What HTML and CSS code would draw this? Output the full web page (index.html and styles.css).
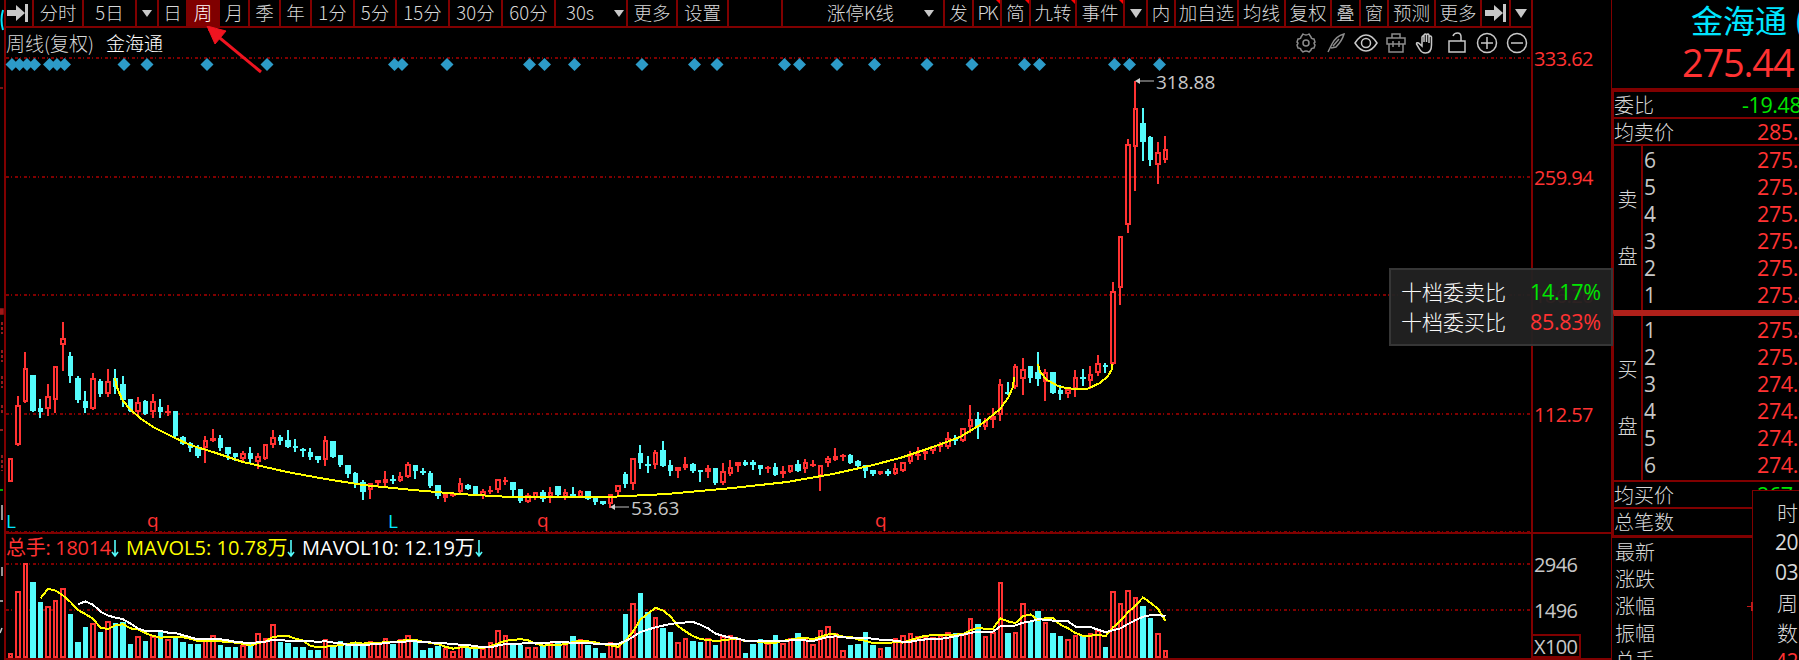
FILE: index.html
```
<!DOCTYPE html>
<html lang="zh-CN">
<head>
  <meta charset="UTF-8">
  <title>金海通 周线</title>
  <link rel="stylesheet" href="styles.css">
</head>
<body>
  <div class="app">
    <!-- Edge of the panel on the left -->
    <svg class="edge" viewBox="0 0 4 660">
      <path d="M3 10Q0 20 3 30" class="e-cyan"/>
      <path d="M0 88h3M0 309h3v5h-3z" class="e-red"/>
      <path d="M2 322v12M2 350v12M2 376v12M2 405v10M0 430h3M2 455v16" class="e-dim"/>
      <path d="M0 490h3" class="e-green"/>
      <path d="M2 505v15M2 567v9M0 601h3M2 628l-2 5" class="e-gray"/>
    </svg>

    <!-- Chart -->
    <div class="chart">
      <div class="toolbar">
        <span class="tab"><svg class="jump" viewBox="0 0 22 20"><path d="M0 7h9V2l9 8-9 8v-5H0zM18 1h3v18h-3z"/></svg></span>
        <span class="tab">分时</span>
        <span class="tab">5日</span>
        <span class="tab"><i class="caret"></i></span>
        <span class="tab">日</span>
        <span class="tab active">周</span>
        <span class="tab">月</span>
        <span class="tab">季</span>
        <span class="tab">年</span>
        <span class="tab">1分</span>
        <span class="tab">5分</span>
        <span class="tab">15分</span>
        <span class="tab">30分</span>
        <span class="tab">60分</span>
        <span class="tab select">30s<i class="caret"></i></span>
        <span class="tab">更多</span>
        <span class="tab">设置</span>
        <span class="tab"></span>
        <span class="tab kline-type">涨停K线<i class="caret"></i></span>
        <span class="tab">发</span>
        <span class="tab tight hot">PK</span>
        <span class="tab hot">简</span>
        <span class="tab hot">九转</span>
        <span class="tab hot">事件</span>
        <span class="tab"><i class="caret big"></i></span>
        <span class="tab">内</span>
        <span class="tab">加自选</span>
        <span class="tab">均线</span>
        <span class="tab">复权</span>
        <span class="tab">叠</span>
        <span class="tab">窗</span>
        <span class="tab">预测</span>
        <span class="tab">更多</span>
        <span class="tab"><svg class="jump" viewBox="0 0 22 20"><path d="M0 7h9V2l9 8-9 8v-5H0zM18 1h3v18h-3z"/></svg></span>
        <span class="tab"><i class="caret big"></i></span>
      </div>

      <div class="title-row">
        <span class="period">周线(复权)</span>
        <span class="stock">金海通</span>
        <div class="tools">
          <svg class="dim" viewBox="0 0 24 22"><path d="M9 2q3 2 6 0l2 3q0 2 3 2l1 3q-2 1 0 3l-1 3q-3 0-3 2l-2 2q-3-2-6 0l-2-2q0-2-3-2l-1-3q2-2 0-3l1-3q3 0 3-2z"/><circle cx="12" cy="11" r="3"/></svg>
          <svg class="dim" viewBox="0 0 24 22"><path d="M4 20L8 12Q12 4 20 2Q18 9 12 15L7 16M9 14l6-7"/></svg>
          <svg viewBox="0 0 24 22"><path d="M1 11Q6 3 12 3T23 11Q18 19 12 19T1 11z"/><circle cx="12" cy="11" r="4.5"/></svg>
          <svg class="dim" viewBox="0 0 24 22"><path d="M3 6h18v6H3zM5 12v8h14v-8M8 6V2h8v4M9 9v6M15 9v6M9 12h6"/></svg>
          <svg viewBox="0 0 24 22"><path d="M8 14V5q1-2 2 0v5V3q1.500-2 2.500 0v7V3q1.500-2 2.500 0v8V5q1.500-2 2.500 0v8q0 8-6 8-4 0-6-4l-3-5q0-2 2-1z"/></svg>
          <svg viewBox="0 0 24 22"><path d="M4 9h16v11H4zM8 4q1-3 4.500-3 3.500 0 3.500 4v4"/></svg>
          <svg viewBox="0 0 24 22"><circle cx="12" cy="11" r="9.500"/><path d="M6 11h12M12 5v12"/></svg>
          <svg viewBox="0 0 24 22"><circle cx="12" cy="11" r="9.500"/><path d="M6 11h12"/></svg>
        </div>
      </div>

      <svg id="kline" class="kline" viewBox="6 56 1525 476"></svg>

      <div class="vol-title">
        <span class="total">总手: 18014<svg viewBox="0 0 8 18"><path d="M4 0v15M1 12l3 4 3-4"/></svg></span>
        <span class="ma5">MAVOL5: 10.78万<svg viewBox="0 0 8 18"><path d="M4 0v15M1 12l3 4 3-4"/></svg></span>
        <span class="ma10">MAVOL10: 12.19万<svg viewBox="0 0 8 18"><path d="M4 0v15M1 12l3 4 3-4"/></svg></span>
      </div>
      <svg id="volume" class="volume" viewBox="6 562 1525 96"></svg>

      <svg class="pointer" viewBox="0 0 60 50">
        <path d="M3 3L55 46" />
        <polygon points="1,0 20,5 9,18"/>
      </svg>
    </div>

    <!-- Price scale -->
    <div class="scale">
      <div class="prices">
        <span>333.62</span>
        <span>259.94</span>
        <span>186.26</span>
        <span>112.57</span>
      </div>
      <div class="vols">
        <span>2946</span>
        <span>1496</span>
        <span class="unit">X100</span>
      </div>
    </div>

    <!-- Quotes -->
    <div class="quotes">
      <div class="head">
        <div class="name">金海通 (</div>
        <div class="price">275.44</div>
      </div>
      <div class="line first"><span>委比</span><b class="down wide">-19.48%</b></div>
      <div class="line"><span>均卖价</span><b>285.10</b></div>
      <div class="book">
        <div class="side"><span>卖</span><span>盘</span></div>
        <div class="levels">
          <div><span>6</span><b>275.77</b></div>
          <div><span>5</span><b>275.70</b></div>
          <div><span>4</span><b>275.66</b></div>
          <div><span>3</span><b>275.60</b></div>
          <div><span>2</span><b>275.50</b></div>
          <div><span>1</span><b>275.45</b></div>
        </div>
      </div>
      <div class="book buy">
        <div class="side"><span>买</span><span>盘</span></div>
        <div class="levels">
          <div><span>1</span><b>275.44</b></div>
          <div><span>2</span><b>275.01</b></div>
          <div><span>3</span><b>274.99</b></div>
          <div><span>4</span><b>274.90</b></div>
          <div><span>5</span><b>274.88</b></div>
          <div><span>6</span><b>274.80</b></div>
        </div>
      </div>
      <div class="line"><span>均买价</span><b class="down">267.10</b></div>
      <div class="line last"><span>总笔数</span></div>
      <div class="stats">
        <div>最新</div>
        <div>涨跌</div>
        <div>涨幅</div>
        <div>振幅</div>
        <div>总手</div>
      </div>

      <div class="popup">
        <div class="cjk">时</div>
        <div>20</div>
        <div>03</div>
        <div class="cjk">周</div>
        <div class="cjk">数</div>
        <div class="up">42</div>
      </div>
      <i class="cross"></i>
    </div>

    <div class="tooltip">
      <span>十档委卖比</span><b class="down">14.17%</b>
      <span>十档委买比</span><b>85.83%</b>
    </div>
  </div>

  <script src="chart.js"></script>
</body>
</html>
```
FILE: styles.css
```
:root {
  --line: #800000;
  --red: #ff3232;
  --cyan: #54fcfc;
  --green: #00e600;
  --text: #c8c8c8;
  --cjk: 'Noto Sans CJK SC', sans-serif;
  --num: 'Open Sans', 'Noto Sans CJK SC', sans-serif;
}

* {
  box-sizing: border-box;
}

body {
  margin: 0;
  background: #000;
  color: #d8d8d8;
  font-family: var(--cjk);
  font-weight: 300;
  overflow: hidden;
}

b {
  font-family: var(--num);
  font-weight: 400;
  color: var(--red);
}

.app {
  position: relative;
  display: grid;
  grid-template-columns: 4px 1527px 80px 188px;
  width: 1799px;
  height: 660px;
  overflow: hidden;
}

.edge {
  width: 4px;
  height: 660px;
  fill: none;
  stroke-width: 1.5;
}

.e-cyan { stroke: #00e5ff; stroke-width: 2; }
.e-red { stroke: #a01818; fill: #a01818; }
.e-dim { stroke: #c02525; stroke-dasharray: 3 2; }
.e-green { stroke: var(--green); }
.e-gray { stroke: var(--text); }

/* Chart column */
.chart {
  position: relative;
  display: flex;
  flex-direction: column;
  border-left: 2px solid var(--line);
}

.toolbar {
  display: grid;
  grid-template-columns: 30px 50px 53px 22px 29px 32px 30px 31px 31px 43px 42px 53px 53px 53px 72px 50px 51px 54px 162px 29px 28px 29px 46px 48px 23px 28px 63px 47px 46px 29px 28px 47px 46px 29px 20px;
  height: 28px;
  margin-left: -2px;
  border-bottom: 2px solid var(--line);
}

.tab {
  position: relative;
  display: flex;
  align-items: center;
  justify-content: center;
  height: 26px;
  padding-bottom: 2px;
  border-right: 2px solid var(--line);
  font-size: 18.5px;
  line-height: 24px;
  white-space: nowrap;
}

.tab:last-child {
  border-right: 0;
}

.tab.active {
  background: var(--line);
  color: #fff;
}

.tab.tight {
  letter-spacing: -2px;
}

.tab.hot::after {
  content: '';
  position: absolute;
  top: 0;
  right: 0;
  border-top: 4px solid #f00;
  border-left: 4px solid transparent;
}

.tab.select {
  justify-content: space-between;
  padding: 0 2px 2px 10px;
}

.tab.kline-type {
  justify-content: flex-end;
  gap: 26px;
  padding-right: 9px;
}

.caret {
  margin-top: 2px;
  border: 5.5px solid transparent;
  border-top: 7px solid var(--text);
  border-bottom: 0;
}

.kline-type .caret {
  margin-left: 4px;
}

.caret.big {
  border-width: 9px 6.5px 0;
}

.jump {
  width: 22px;
  height: 20px;
  margin-top: 2px;
  fill: var(--text);
}

.title-row {
  display: flex;
  align-items: center;
  height: 28px;
  font-size: 19px;
  line-height: 26px;
  padding-top: 2px;
}

.stock {
  margin-left: 12px;
  color: #fff;
}

.tools {
  display: flex;
  gap: 6.2px;
  margin-left: auto;
  padding-right: 2px;
}

.tools svg {
  width: 24px;
  height: 22px;
  fill: none;
  stroke: #c8c8c8;
  stroke-width: 1.5;
}

.tools .dim {
  stroke: #8c8c8c;
}

.kline {
  display: block;
  width: 1525px;
  height: 476px;
  overflow: visible;
}

.vol-title {
  display: grid;
  grid-template-columns: 120px 176px 200px;
  height: 30px;
  border-top: 2px solid var(--line);
  font-family: var(--num);
  font-size: 20px;
  font-weight: 400;
  line-height: 28px;
  letter-spacing: 0;
  white-space: nowrap;
}

.vol-title svg {
  width: 8px;
  height: 18px;
  vertical-align: -3px;
  fill: none;
  stroke: var(--cyan);
  stroke-width: 1.6;
}

.total { color: var(--red); letter-spacing: -0.3px; }
.ma5 { color: #ff0; }
.ma10 { color: #fff; }

.volume {
  display: block;
  width: 1525px;
  height: 98px;
  border-bottom: 2px solid var(--line);
}

.grid {
  stroke: var(--line);
  stroke-width: 2;
  stroke-dasharray: 3 2 1 3;
}

.up-bar { stroke: var(--red); stroke-width: 2; fill: #000; }
.up-fill { fill: var(--red); }
.down-fill { fill: var(--cyan); }
.diamond { fill: #2d9bc8; }
.arc { fill: none; stroke: #ff0; stroke-width: 2; }
.avg5 { fill: none; stroke: #ff0; stroke-width: 2; }
.avg10 { fill: none; stroke: #fff; stroke-width: 2; }
.mark { font: 19px 'Open Sans', sans-serif; }
.mark-l { fill: #00e5ff; }
.mark-q { fill: var(--red); }
.mark-p { fill: var(--text); }
.lead { stroke: #808080; stroke-width: 1.5; }
.lead-head { fill: #d0d0d0; }

.pointer {
  position: absolute;
  left: 200px;
  top: 26px;
  width: 60px;
  height: 50px;
  fill: #f01420;
  stroke: #f01420;
}

.pointer path {
  stroke-width: 3;
}

/* Price scale */
.scale {
  display: flex;
  flex-direction: column;
  border-left: 2px solid var(--line);
  color: var(--text);
  font-family: var(--num);
  font-size: 20px;
  font-weight: 400;
  letter-spacing: -0.6px;
}

.prices {
  height: 532px;
  color: var(--red);
}

.prices span {
  display: block;
  height: 118.6px;
  padding-left: 1px;
  line-height: 118.6px;
}

.vols {
  display: flex;
  flex-direction: column;
  height: 128px;
  padding-top: 10px;
  border-top: 2px solid var(--line);
  border-bottom: 2px solid var(--line);
}

.vols span {
  height: 46px;
  padding-left: 1px;
  line-height: 41px;
}

.vols .unit {
  width: 48px;
  height: 24px;
  margin-top: -2px;
  flex: none;
  border: 2px solid var(--line);
  border-left: 0;
  line-height: 21px;
}

/* Quotes */
.quotes {
  position: relative;
  border-left: 1px solid var(--line);
  overflow: hidden;
  font-size: 20px;
}

.head {
  height: 92px;
  border-bottom: 4px solid var(--line);
}

.name {
  height: 44px;
  padding-left: 79px;
  color: #00e5ff;
  font-size: 32px;
  font-weight: 400;
  line-height: 38px;
  white-space: nowrap;
}

.price {
  padding-left: 70px;
  color: var(--red);
  font-family: var(--num);
  font-size: 38px;
  font-weight: 400;
  line-height: 37px;
  letter-spacing: -1.2px;
}

.line {
  display: flex;
  height: 27px;
  border-left: 2px solid var(--line);
  border-bottom: 2px solid var(--line);
  line-height: 25px;
}

.line span {
  flex: none;
  width: 143px;
}

.line.last {
  height: 29px;
  border-bottom-width: 3px;
}

.quotes b {
  font-size: 21.5px;
  letter-spacing: -0.4px;
}

.quotes .down,
.tooltip .down {
  color: var(--green);
}

.line .wide {
  margin-left: -15px;
}

.book {
  display: grid;
  grid-template-columns: 29px 1fr;
  height: 164px;
  border-left: 2px solid var(--line);
}

.book.buy {
  height: 172px;
  border-top: 6px solid #b0201a;
  border-bottom: 2px solid var(--line);
}

.side {
  display: flex;
  flex-direction: column;
  align-items: center;
  gap: 28px;
  padding-top: 38px;
  border-right: 2px solid var(--line);
  line-height: 29px;
}

.levels {
  color: var(--text);
  font-family: var(--num);
  font-size: 21px;
  font-weight: 400;
}

.levels div {
  display: flex;
  height: 27.1px;
  padding-left: 1px;
  line-height: 28px;
}

.levels span {
  flex: none;
  width: 113px;
}

.stats {
  padding-left: 3px;
  line-height: 27px;
}

.popup {
  position: absolute;
  left: 140px;
  top: 490px;
  width: 60px;
  height: 180px;
  padding: 6px 0 0 22px;
  border: 1px solid var(--line);
  background: #000;
  font-family: var(--num);
  font-size: 21px;
  font-weight: 400;
  line-height: 30px;
  letter-spacing: -0.6px;
}

.popup .cjk {
  padding-left: 2px;
  font-family: var(--cjk);
  font-weight: 300;
}

.popup .up {
  color: var(--red);
  line-height: 28px;
}

.cross {
  position: absolute;
  left: 135px;
  top: 602px;
  width: 6px;
  height: 9px;
  border-right: 2px solid #c01818;
  background: linear-gradient(#c01818, #c01818) 0 4px / 6px 1px no-repeat;
}

.tooltip {
  position: absolute;
  left: 1389px;
  top: 268px;
  display: grid;
  grid-template-columns: 129px 1fr;
  align-content: start;
  width: 224px;
  height: 78px;
  padding: 6px 0 0 10px;
  border: 2px solid #363636;
  background: rgba(34, 34, 34, 0.95);
  color: #f8f8f8;
  font-size: 21px;
  line-height: 30px;
}

.tooltip b {
  padding-top: 1px;
  font-size: 21.5px;
  letter-spacing: -0.3px;
  line-height: 29px;
}
```
FILE: chart.js
```
// high, body top, body bottom, low, volume top; c = falling week
const weeks = `
458 458 482 482 653 r|396 405 445 446 591 r|352 368 402 403 563 r|375 375 411 412 582 c|399 408 412 418 602 c
384 396 409 416 606 r|366 366 400 413 600 r|322 338 345 371 588 r|352 356 376 383 614 c|376 378 400 403 642 c
391 401 408 413 627 c|373 378 409 410 623 r|379 381 394 397 632 c|369 381 394 397 621 r|369 378 387 394 623 c
376 384 400 407 622 c|399 399 411 412 644 c|397 402 412 415 636 r|400 401 414 415 641 c|394 401 412 418 636 r
399 407 412 418 632 c|405 411 413 416 639 r|411 411 436 437 637 c|436 437 444 445 642 c|442 443 448 452 644 c
445 447 456 458 644 c|436 440 448 463 639 r|429 438 441 442 635 r|435 438 448 451 645 c|447 447 454 460 647 c
453 453 457 461 647 c|451 453 459 461 645 r|447 453 459 463 644 c|453 456 462 469 633 r|444 444 459 460 638 r
430 437 445 448 624 r|435 437 441 445 642 c|430 440 447 448 643 c|439 446 448 452 647 c|448 449 451 457 647 c
448 452 457 460 650 c|456 456 460 463 650 c|436 440 460 466 639 r|441 441 457 458 645 c|455 455 465 467 641 c
465 465 474 478 645 c|472 473 483 488 642 c|480 482 492 500 645 c|483 483 490 499 641 r|480 480 483 486 643 r
471 479 483 487 638 r|475 479 481 484 644 c|472 476 481 482 639 r|462 464 477 478 635 r|465 465 471 479 642 c
468 471 473 475 650 c|471 473 486 488 648 c|485 485 496 499 646 c|493 494 498 502 648 r|492 493 496 497 651 r
478 483 492 494 644 r|484 485 489 490 648 c|486 486 494 495 649 c|489 491 496 499 648 r|486 490 491 494 642 r
479 479 490 493 630 r|477 480 482 485 635 r|482 482 490 496 644 c|489 489 501 503 645 c|493 495 502 503 647 r
492 492 498 500 647 r|490 492 499 502 645 c|487 492 497 503 642 r|486 486 495 496 643 c|489 492 497 500 644 r
487 494 496 497 636 c|490 491 497 498 639 r|491 491 499 500 645 c|497 498 502 505 648 c|501 501 504 505 653 c
494 494 504 508 642 r|485 485 492 496 646 r|472 474 484 488 614 c|458 458 484 490 603 r|445 453 463 469 593 c
456 464 466 473 612 c|450 452 465 469 617 r|441 450 466 467 628 c|460 465 471 476 632 c|467 467 471 478 642 r
457 464 468 470 638 r|463 464 471 473 641 c|470 470 472 482 642 c|465 468 472 478 638 r|468 468 483 485 645 c
463 471 483 485 636 r|460 467 474 476 635 r|462 462 466 472 638 r|460 462 465 466 653 c|460 462 465 470 644 c
465 465 469 475 639 c|466 467 469 473 643 r|463 467 475 476 635 c|466 471 474 478 643 r|465 465 472 473 638 r
460 464 471 472 633 c|459 462 469 473 639 r|460 464 466 467 644 r|465 465 476 491 630 r|456 458 463 467 626 r
448 456 460 461 633 r|454 455 457 461 650 r|454 455 463 464 645 c|460 461 466 467 644 c|465 465 471 478 632 c
470 470 474 476 645 c|471 471 474 475 648 r|469 471 474 476 647 c|463 468 474 475 638 r|462 462 471 472 635 r
451 455 462 464 633 r|447 454 456 460 636 r|450 451 454 460 636 r|446 446 451 454 637 r|442 445 447 452 635 r
432 438 447 449 632 r|435 438 441 445 633 c|428 428 441 442 633 r|405 419 427 433 618 r|412 419 427 439 624 c
418 421 427 430 636 r|408 416 420 428 632 r|379 384 415 421 582 r|382 392 394 395 633 c|364 366 387 389 632 r
358 369 379 395 603 r|366 366 378 383 622 c|352 372 379 386 611 c|369 372 382 401 622 r|372 372 393 394 633 c
385 390 394 400 636 c|387 389 394 398 639 r|370 377 389 397 635 r|369 377 379 386 636 c|366 374 381 389 633 r
355 363 373 376 630 r|363 365 367 373 647 c|282 291 364 365 591 r|236 236 288 305 603 r|139 144 225 233 590 r
81 108 147 191 597 r|108 123 142 161 606 c|136 137 160 166 618 c|142 152 165 184 633 r|136 149 160 163 650 r
`.trim().split(/[|\n]/).map(row => row.split(' '));

const eventDays = [12, 19.5, 27, 34.5, 49.5, 57, 64.5, 124, 147, 207, 267, 394.5, 402, 447, 529.5, 544.5,
  574.5, 642, 694.5, 717, 784.5, 799.5, 837, 874.5, 927, 972, 1024.5, 1039.5, 1114.5, 1129.5, 1159.5];

const BASE = 658;

function grid(y) {
  return `<line class="grid" shape-rendering="crispEdges" x1="6" x2="1531" y1="${y}" y2="${y}"/>`;
}

function box(x, y, w, h, cls) {
  return `<rect class="${cls}" x="${x}" y="${y}" width="${w}" height="${h}"/>`;
}

// rising bars are hollow, falling bars are solid
function bar(x, top, bottom, w, color) {
  const h = Math.max(bottom - top, 2);
  if (color === 'c') return box(x, top, w, h, 'down-fill');
  if (h < 5) return box(x, top, w, h, 'up-fill');
  return box(x + 1, top + 1, w - 2, h - 2, 'up-bar');
}

function average(n) {
  const points = [];
  for (let i = n - 1; i < weeks.length; i++) {
    let sum = 0;
    for (let k = 0; k < n; k++) sum += +weeks[i - k][4];
    points.push((10.5 + 7.5 * i) + ',' + (sum / n).toFixed(1));
  }
  return points.join(' ');
}

let candles = '';
let volumes = '';
weeks.forEach((week, i) => {
  const [high, top, bottom, low, vol] = week.slice(0, 5).map(Number);
  const color = week[5];
  const x = Math.floor(8 + 7.5 * i);
  const w = i % 2 ? 6 : 5;
  candles += box(x + (i % 2 ? 2 : 1), high, 2, low - high, color === 'c' ? 'down-fill' : 'up-fill');
  candles += bar(x, top, bottom, w, color);
  volumes += bar(x, vol, BASE, w, color);
});

const diamonds = eventDays.map(x =>
  `<polygon class="diamond" points="${x - 6.5},64.5 ${x},58 ${x + 6.5},64.5 ${x},71"/>`).join('');

document.getElementById('kline').innerHTML = `
  ${[58, 177, 295, 414, 532].map(grid).join('')}
  ${diamonds}
  <g shape-rendering="crispEdges">${candles}
    <polyline class="arc" points="115,378 116,384 118,390 123,401 130,409 140,418 153,427 173,437 190,445 213,452 243,462 287,472 320,478 363,485 413,490 460,494 510,497 607,497 667,494 733,488 787,482 833,474 873,465 900,458 933,447 960,437 983,423 1000,409 1008,398 1013,387 1014,377"/>
    <polyline class="arc" points="1038,364 1040,372 1047,380 1060,387 1075,389 1087,389 1100,383 1108,376 1112,369 1112,364"/>
  </g>
  <text class="mark mark-l" x="6" y="528">L</text>
  <text class="mark mark-q" x="147" y="527">q</text>
  <text class="mark mark-l" x="388" y="528">L</text>
  <text class="mark mark-q" x="537" y="527">q</text>
  <text class="mark mark-q" x="875" y="527">q</text>
  <line class="lead" x1="1139" x2="1154" y1="81" y2="81"/>
  <polygon class="lead-head" points="1135,81 1140,78 1140,84"/>
  <text class="mark mark-p" x="1156" y="89">318.88</text>
  <line class="lead" x1="614" x2="629" y1="507" y2="507"/>
  <polygon class="lead-head" points="610,507 615,504 615,510"/>
  <text class="mark mark-p" x="631" y="515">53.63</text>`;

document.getElementById('volume').innerHTML = `
  ${[564, 610].map(grid).join('')}
  <g shape-rendering="crispEdges">${volumes}
    <polyline class="avg5" points="${average(5)}"/>
    <polyline class="avg10" points="${average(10)}"/>
  </g>`;
```
